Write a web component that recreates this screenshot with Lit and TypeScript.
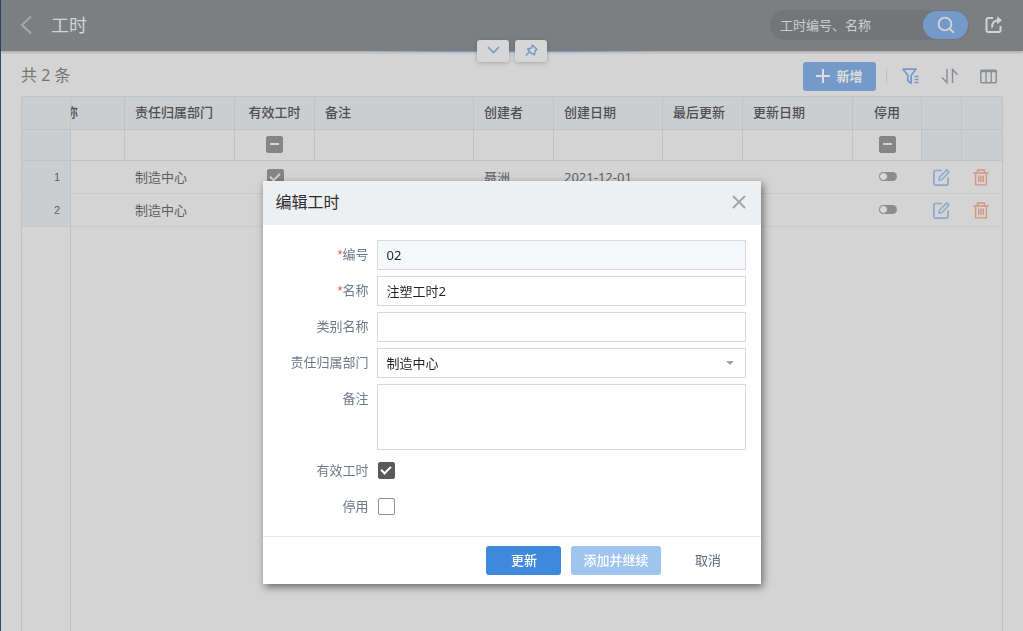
import { LitElement, html, css, svg } from "lit";
import { customElement, property, state } from "lit/decorators.js";

interface WorkHour {
  dept: string;
  effective: boolean;
  creator: string;
  created: string;
}

const ROWS: WorkHour[] = [
  { dept: "制造中心", effective: true, creator: "聂洲", created: "2021-12-01" },
  { dept: "制造中心", effective: true, creator: "聂洲", created: "2021-12-01" },
];

const SHAPES: Record<string, unknown> = {
  back: svg`<path d="M11 1.500 2 10l9 8.500" stroke-width="2" />`,
  search: svg`<circle cx="8" cy="8" r="6.4" stroke-width="1.9" /><path d="m12.600 12.600 4.200 4.200" stroke-width="2" />`,
  share: svg`<path d="M8 2H3.2A1.7 1.7 0 0 0 1.5 3.700V14.300A1.700 1.700 0 0 0 3.200 16H13.800A1.700 1.700 0 0 0 15.500 14.300V10" stroke-width="2" /><path d="M7 11.500C7 6.500 10 4.200 14 4.200" stroke-width="2" /><path d="M12.200.200 16.900 4.200 12.200 8.200z" fill="currentColor" stroke="none" />`,
  down: svg`<path d="m1 1 5.500 5.500L12 1" stroke-width="1.600" />`,
  pin: svg`<path d="M7.500 1 12 5.500 10.300 6.500 9.300 10.800 5.800 8.800 2.600 5 6.500 4z M4.400 7.800 1 11.500" stroke-width="1.500" stroke-linejoin="round" />`,
  plus: svg`<path d="M7 0v14M0 7h14" stroke-width="2" />`,
  filter: svg`<path d="M1 1.200H14L9.200 7.200V15.200L5.800 12.800V7.200Z" stroke-width="1.700" stroke-linejoin="round" /><path d="M12.500 8.500h4M12.500 11.500h4M12.500 14.500h4" stroke-width="1.600" />`,
  sort: svg`<path d="M6 1V14.500L1 9.500M11.500 15V1.500L16.500 6.500" stroke-width="1.500" />`,
  columns: svg`<rect x=".8" y="1.200" width="15.500" height="12.600" rx="1" stroke-width="1.500" /><path d="M.8 2.500H16.300M6 2v12M11.200 2v12" stroke-width="1.400" />`,
  edit: svg`<path d="M9 1.500H2.500A1.600 1.600 0 0 0 .9 3.100V14.500A1.600 1.600 0 0 0 2.500 16.100H13.500A1.600 1.600 0 0 0 15.100 14.500V8.500" stroke-width="1.700" /><path d="M6 11.200 6.600 8 13.800.9 16 3.100 9 10.400Z" stroke-width="1.500" stroke-linejoin="round" />`,
  trash: svg`<path d="M.2 4H15.800M4.500 3.800V1H11.500V3.800M2.600 4V15.900H13.400V4M5.700 6.500v6.500M8 6.500v6.500M10.300 6.500v6.500" stroke-width="1.400" />`,
  close: svg`<path d="m1 1 12 12M13 1 1 13" stroke-width="1.900" />`,
  caret: svg`<path d="M0 0h8L4 4z" fill="currentColor" stroke="none" />`,
};

const icon = (name: string, w: number, h: number) => html`<svg
  width=${w}
  height=${h}
  viewBox="0 0 ${w} ${h}"
  fill="none"
  stroke="currentColor"
  aria-hidden="true"
>${SHAPES[name]}</svg>`;

const shared = css`
  *,
  *::before {
    box-sizing: border-box;
  }
  button,
  input,
  select,
  textarea {
    font: inherit;
    color: inherit;
    margin: 0;
    padding: 0;
    border: 0;
    border-radius: 0;
    background: none;
    outline: none;
  }
  button {
    display: inline-flex;
    align-items: center;
    justify-content: center;
    cursor: pointer;
  }
  svg {
    display: block;
    flex: none;
  }
  .check {
    appearance: none;
    display: grid;
    place-items: center;
    width: 17px;
    height: 17px;
    border: 1px solid #8f8f8f;
    border-radius: 2px;
  }
  .check:checked,
  .check:indeterminate {
    background: #5a5a5a;
    border-color: #5a5a5a;
  }
  .check:checked::before {
    content: "";
    width: 10px;
    height: 6px;
    margin-top: -3px;
    border: solid #fff;
    border-width: 0 0 2px 2px;
    transform: rotate(-45deg);
  }
  .check:indeterminate::before {
    content: "";
    width: 9px;
    height: 2px;
    background: #d4d4d4;
  }
`;

@customElement("hours-grid")
export class HoursGrid extends LitElement {
  @property({ attribute: false }) rows: WorkHour[] = [];

  static styles = [
    shared,
    css`
      :host {
        display: flex;
        flex-direction: column;
        flex: 1;
        border: 1px solid #c1c2c6;
        border-bottom: 0;
        color: #5f5f61;
      }
      table {
        width: 100%;
        table-layout: fixed;
        border-collapse: separate;
        border-spacing: 0;
        line-height: 20px;
      }
      .c-index { width: 49px; }
      .c-name { width: 54px; }
      .c-wide { width: 110px; }
      .c-date { width: 109px; }
      .c-mid { width: 80px; }
      .c-off { width: 69px; }
      .c-act { width: 40px; }
      th,
      td {
        padding: 0 10px;
        height: 33px;
        text-align: left;
        white-space: nowrap;
        overflow: hidden;
        border-bottom: 1px solid #c8c9cc;
      }
      th {
        padding-bottom: 2px;
        font-weight: 500;
        color: #4f5052;
        background: #cccdd0;
      }
      th,
      .filters td {
        border-right: 1px solid #c1c2c6;
        border-bottom-color: #c1c2c8;
      }
      .filters td {
        height: 31px;
      }
      .filters td,
      .ctl {
        padding-bottom: 2px;
      }
      .index {
        text-align: right;
        border-right: 1px solid #c1c2c8;
        background: #cccdd0;
        font-family: "Liberation Sans", sans-serif;
        font-size: 11px;
      }
      .filters .plain {
        background: #cccdd0;
      }
      tr > :last-child {
        border-right: 0;
      }
      .scrolled {
        padding: 0 0 2px;
        text-indent: -19px;
      }
      .center {
        text-align: center;
      }
      .check {
        margin: 0 auto;
      }
      .check:checked,
      .check:indeterminate {
        background: #858585;
        border-color: #858585;
      }
      .check:checked::before {
        border-color: #d4d4d4;
      }
      .switch {
        appearance: none;
        display: block;
        margin: 0 auto;
        width: 18px;
        height: 9px;
        border-radius: 5px;
        background: #8c8c8c;
      }
      .switch::before {
        content: "";
        display: block;
        width: 9px;
        height: 9px;
        border: 1px solid #8c8c8c;
        border-radius: 50%;
        background: #d8d8d8;
      }
      .act {
        padding: 0 2px 2px 0;
        text-align: center;
      }
      .act button {
        vertical-align: middle;
      }
      .edit { color: #8aa9d2; }
      .trash { color: #d69482; }
      .rest {
        flex: 1;
        width: 49px;
        border-right: 1px solid #c1c2c8;
      }
    `,
  ];

  render() {
    return html`
      <table>
        <colgroup>
          <col class="c-index" /><col class="c-name" /><col class="c-wide" /><col class="c-mid" /><col />
          <col class="c-mid" /><col class="c-date" /><col class="c-mid" /><col class="c-wide" />
          <col class="c-off" /><col class="c-act" /><col class="c-act" />
        </colgroup>
        <thead>
          <tr>
            <th></th>
            <th class="scrolled">名称</th>
            <th>责任归属部门</th>
            <th class="center">有效工时</th>
            <th>备注</th>
            <th>创建者</th>
            <th>创建日期</th>
            <th>最后更新</th>
            <th>更新日期</th>
            <th class="center">停用</th>
            <th></th>
            <th></th>
          </tr>
        </thead>
        <tbody>
          <tr class="filters">
            <td class="plain"></td>
            <td></td>
            <td></td>
            <td><input class="check" type="checkbox" aria-label="有效工时" .indeterminate=${true} /></td>
            <td></td>
            <td></td>
            <td></td>
            <td></td>
            <td></td>
            <td><input class="check" type="checkbox" aria-label="停用" .indeterminate=${true} /></td>
            <td class="plain"></td>
            <td class="plain"></td>
          </tr>
          ${this.rows.map(
            (r, i) => html`<tr>
              <td class="index">${i + 1}</td>
              <td></td>
              <td>${r.dept}</td>
              <td><input class="check" type="checkbox" aria-label="有效工时" .checked=${r.effective} /></td>
              <td></td>
              <td>${r.creator}</td>
              <td>${r.created}</td>
              <td></td>
              <td></td>
              <td class="ctl"><input class="switch" type="checkbox" role="switch" aria-label="停用" /></td>
              <td class="act"><button class="edit" aria-label="编辑">${icon("edit", 17, 17)}</button></td>
              <td class="act"><button class="trash" aria-label="删除">${icon("trash", 16, 17)}</button></td>
            </tr>`
          )}
        </tbody>
      </table>
      <div class="rest"></div>
    `;
  }
}

@customElement("hours-dialog")
export class HoursDialog extends LitElement {
  static styles = [
    shared,
    css`
      :host {
        display: block;
        width: 498px;
        max-width: 100%;
        background: #fff;
        box-shadow: 2px 3px 8px rgba(0, 0, 0, 0.5);
        color: #1f2329;
      }
      header {
        display: flex;
        align-items: center;
        justify-content: space-between;
        height: 44px;
        padding: 0 15px 2px 13px;
        background: #eeeff1;
      }
      h2 {
        margin: 0;
        font-size: 16px;
        font-weight: 400;
        line-height: 24px;
        color: #2b2d30;
      }
      .close {
        color: #a2a4a7;
      }
      form {
        display: grid;
        grid-template-columns: 91px 1fr;
        gap: 6px 8px;
        padding: 15px 15px 14px;
      }
      label {
        height: 30px;
        line-height: 28px;
        text-align: right;
        white-space: nowrap;
        color: #6e7989;
      }
      .req {
        font-family: "Liberation Sans", sans-serif;
        color: #f0512d;
      }
      .box {
        width: 100%;
        height: 30px;
        padding: 0 9px 1px;
        border: 1px solid #d7d8da;
        background: #fff;
      }
      .locked {
        background: #f6f8fb;
      }
      textarea.box {
        display: block;
        height: 66px;
        padding: 5px 9px;
        resize: none;
      }
      .picker {
        position: relative;
      }
      select.box {
        appearance: none;
        display: block;
      }
      .picker svg {
        position: absolute;
        right: 12px;
        top: 13px;
        color: #a0a2a5;
        pointer-events: none;
      }
      .tick {
        display: flex;
        align-items: center;
        padding: 0 0 2px 1px;
      }
      footer {
        display: flex;
        justify-content: flex-end;
        gap: 10px;
        padding: 9px 15px;
        border-top: 1px solid #e6e7e9;
      }
      footer button {
        min-width: 75px;
        height: 29px;
        padding: 0 12px 2px;
        border-radius: 3px;
        color: #5c697b;
      }
      footer .primary {
        background: #3f89dd;
        color: #fff;
        font-weight: 500;
      }
      footer .faded {
        background: #9fc4ee;
        color: #fff;
        font-weight: 500;
      }
    `,
  ];

  render() {
    return html`
      <header>
        <h2>编辑工时</h2>
        <button class="close" aria-label="关闭">${icon("close", 14, 14)}</button>
      </header>
      <form>
        <label for="code"><span class="req">*</span>编号</label>
        <input id="code" class="box locked" type="text" readonly .value=${"02"} />
        <label for="name"><span class="req">*</span>名称</label>
        <input id="name" class="box" type="text" .value=${"注塑工时2"} />
        <label for="kind">类别名称</label>
        <input id="kind" class="box" type="text" />
        <label for="dept">责任归属部门</label>
        <div class="picker">
          <select id="dept" class="box"><option>制造中心</option></select>
          ${icon("caret", 8, 4)}
        </div>
        <label for="memo">备注</label>
        <textarea id="memo" class="box"></textarea>
        <label for="valid">有效工时</label>
        <div class="tick"><input id="valid" class="check" type="checkbox" checked /></div>
        <label for="off">停用</label>
        <div class="tick"><input id="off" class="check" type="checkbox" /></div>
      </form>
      <footer>
        <button class="primary">更新</button>
        <button class="faded">添加并继续</button>
        <button>取消</button>
      </footer>
    `;
  }
}

@customElement("app-root")
export class AppRoot extends LitElement {
  @state() private rows = ROWS;

  static styles = [
    shared,
    css`
      :host {
        display: flex;
        flex-direction: column;
        min-height: 100vh;
        box-sizing: border-box;
        border-left: 1px solid #2d4a69;
        background: #d4d4d4;
        font: 13px/20px "Noto Sans", "Noto Sans CJK SC", sans-serif;
      }
      .top {
        position: relative;
        display: flex;
        align-items: center;
        height: 51px;
        padding: 0 21px 2px 19px;
        background: #7b7f81;
        color: #d2d3d3;
        box-shadow: 0 1px 3px rgba(0, 0, 0, 0.25);
      }
      .back {
        color: #a6a9aa;
      }
      h1 {
        flex: 1;
        margin: 0 0 0 17px;
        font-size: 18px;
        font-weight: 400;
        line-height: 26px;
      }
      .search {
        display: flex;
        align-items: center;
        width: 199px;
        height: 30px;
        margin-right: 16px;
        padding-right: 1px;
        border-radius: 15px;
        background: #737678;
      }
      .search input {
        flex: 1;
        min-width: 0;
        padding-left: 10px;
      }
      .search input::placeholder {
        color: #cdcecf;
        opacity: 1;
      }
      .search button {
        width: 45px;
        height: 28px;
        border-radius: 14px;
        background: #7599c9;
      }
      .glow {
        position: absolute;
        left: 36%;
        right: 36%;
        bottom: -1px;
        height: 1px;
        background: linear-gradient(90deg, transparent, #7599c9 30%, #7599c9 70%, transparent);
      }
      .tabs {
        position: absolute;
        left: 50%;
        bottom: -11px;
        display: flex;
        gap: 6px;
        transform: translateX(-50%);
      }
      .tabs button {
        width: 32px;
        height: 22px;
        padding-bottom: 2px;
        border-radius: 3px;
        background: #d6d6d6;
        color: #7599c9;
        box-shadow: 0 1px 4px rgba(0, 0, 0, 0.22);
      }
      .content {
        display: flex;
        flex-direction: column;
        flex: 1;
        padding: 0 20px;
      }
      .bar {
        display: flex;
        align-items: center;
        height: 45px;
        padding: 5px 6px 0 0;
        color: #8a8e99;
      }
      .count {
        flex: 1;
        padding-bottom: 2px;
        font-size: 16px;
        color: #747576;
      }
      .add {
        gap: 6px;
        width: 73px;
        height: 29px;
        border-radius: 3px;
        background: #7599c9;
        color: #dcdddf;
        font-weight: 700;
      }
      .rule {
        width: 1px;
        height: 14px;
        margin: 0 15px 0 10px;
        background: #bcbdbf;
      }
      .tools {
        display: flex;
        gap: 21px;
      }
      .tools .on {
        color: #7599c9;
      }
      .layer {
        position: fixed;
        inset: 0;
        display: flex;
        justify-content: center;
        align-items: flex-start;
        padding-top: 181px;
      }
    `,
  ];

  render() {
    return html`
      <header class="top">
        <button class="back" aria-label="返回">${icon("back", 14, 20)}</button>
        <h1>工时</h1>
        <div class="search">
          <input type="text" placeholder="工时编号、名称" aria-label="搜索" />
          <button aria-label="搜索">${icon("search", 18, 18)}</button>
        </div>
        <button aria-label="分享">${icon("share", 17, 17)}</button>
        <div class="glow"></div>
        <div class="tabs">
          <button aria-label="展开">${icon("down", 13, 8)}</button>
          <button aria-label="固定">${icon("pin", 13, 13)}</button>
        </div>
      </header>
      <main class="content">
        <div class="bar">
          <span class="count">共 2 条</span>
          <button class="add">${icon("plus", 14, 14)}新增</button>
          <span class="rule"></span>
          <div class="tools">
            <button class="on" aria-label="筛选">${icon("filter", 18, 16)}</button>
            <button aria-label="排序">${icon("sort", 18, 16)}</button>
            <button aria-label="列设置">${icon("columns", 17, 15)}</button>
          </div>
        </div>
        <hours-grid .rows=${this.rows}></hours-grid>
      </main>
      <div class="layer">
        <hours-dialog role="dialog" aria-label="编辑工时"></hours-dialog>
      </div>
    `;
  }
}
